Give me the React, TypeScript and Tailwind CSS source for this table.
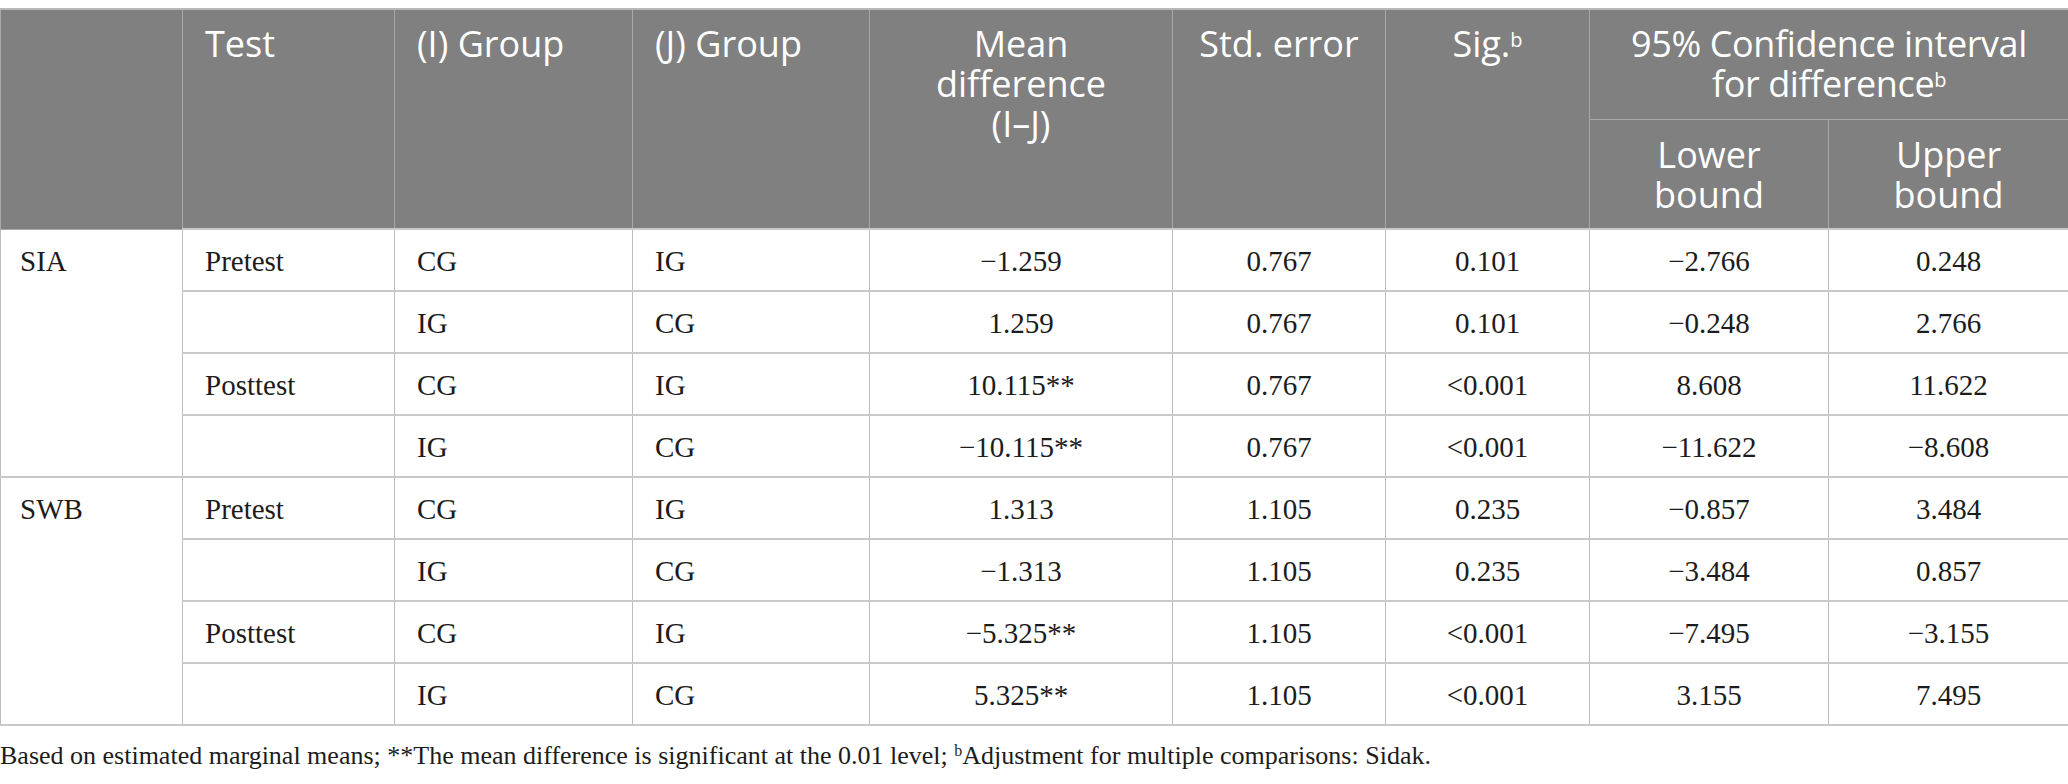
import React from 'react';

type Row = {
  measure?: string;
  span?: number;
  test: string;
  i: string;
  j: string;
  mean: string;
  se: string;
  sig: string;
  lo: string;
  hi: string;
};

const rows: Row[] = [
  { measure: 'SIA', span: 4, test: 'Pretest', i: 'CG', j: 'IG', mean: '−1.259', se: '0.767', sig: '0.101', lo: '−2.766', hi: '0.248' },
  { test: '', i: 'IG', j: 'CG', mean: '1.259', se: '0.767', sig: '0.101', lo: '−0.248', hi: '2.766' },
  { test: 'Posttest', i: 'CG', j: 'IG', mean: '10.115**', se: '0.767', sig: '<0.001', lo: '8.608', hi: '11.622' },
  { test: '', i: 'IG', j: 'CG', mean: '−10.115**', se: '0.767', sig: '<0.001', lo: '−11.622', hi: '−8.608' },
  { measure: 'SWB', span: 4, test: 'Pretest', i: 'CG', j: 'IG', mean: '1.313', se: '1.105', sig: '0.235', lo: '−0.857', hi: '3.484' },
  { test: '', i: 'IG', j: 'CG', mean: '−1.313', se: '1.105', sig: '0.235', lo: '−3.484', hi: '0.857' },
  { test: 'Posttest', i: 'CG', j: 'IG', mean: '−5.325**', se: '1.105', sig: '<0.001', lo: '−7.495', hi: '−3.155' },
  { test: '', i: 'IG', j: 'CG', mean: '5.325**', se: '1.105', sig: '<0.001', lo: '3.155', hi: '7.495' },
];

const th = 'bg-[#808080] border border-[#a9a9a9] text-white font-normal align-top';
const td = 'border-x border-x-[#bcbcbc] border-y-2 border-y-[#c9c9c9] pt-[4px] align-middle';

export default function App() {
  return (
    <div className="w-[2068px] bg-white pt-2 font-['Liberation_Serif',serif] text-[#1c1c1c]">
      <table className="w-[2068px] table-fixed border-collapse border-t-2 border-t-[#b8b8b8]">
        <colgroup>
          <col className="w-[182px]" />
          <col className="w-[212px]" />
          <col className="w-[238px]" />
          <col className="w-[237px]" />
          <col className="w-[303px]" />
          <col className="w-[213px]" />
          <col className="w-[204px]" />
          <col className="w-[239px]" />
          <col className="w-[240px]" />
        </colgroup>
        <thead className="font-['Open_Sans',sans-serif] text-[36px] leading-[40px]">
          <tr className="h-[110px]">
            <th rowSpan={2} className={th} />
            <th rowSpan={2} className={`${th} text-left pl-[22px] pt-[14px]`}>Test</th>
            <th rowSpan={2} className={`${th} text-left pl-[22px] pt-[14px]`}>(I) Group</th>
            <th rowSpan={2} className={`${th} text-left pl-[22px] pt-[14px]`}>(J) Group</th>
            <th rowSpan={2} className={`${th} text-center pt-[14px]`}>
              Mean
              <br />
              difference
              <br />
              (I–J)
            </th>
            <th rowSpan={2} className={`${th} text-center pt-[14px]`}>Std. error</th>
            <th rowSpan={2} className={`${th} text-center pt-[14px]`}>
              Sig.<sup className="text-[20px]">b</sup>
            </th>
            <th colSpan={2} className={`${th} text-center pt-[14px] tracking-[-0.4px]`}>
              95% Confidence interval
              <br />
              for difference<sup className="text-[20px]">b</sup>
            </th>
          </tr>
          <tr className="h-[110px]">
            <th className={`${th} text-center pt-[15px]`}>
              Lower
              <br />
              bound
            </th>
            <th className={`${th} text-center pt-[15px]`}>
              Upper
              <br />
              bound
            </th>
          </tr>
        </thead>
        <tbody className="text-[29px]">
          {rows.map((r, idx) => (
            <tr key={idx} className="h-[62px]">
              {r.measure && (
                <td rowSpan={r.span} className="border border-[#bcbcbc] border-b-2 border-b-[#c9c9c9] align-top pl-[19px] pt-[10px]">
                  {r.measure}
                </td>
              )}
              <td className={`${td} pl-[22px]`}>{r.test}</td>
              <td className={`${td} pl-[22px]`}>{r.i}</td>
              <td className={`${td} pl-[22px]`}>{r.j}</td>
              <td className={`${td} text-center`}>{r.mean}</td>
              <td className={`${td} text-center`}>{r.se}</td>
              <td className={`${td} text-center`}>{r.sig}</td>
              <td className={`${td} text-center`}>{r.lo}</td>
              <td className={`${td} text-center`}>{r.hi}</td>
            </tr>
          ))}
        </tbody>
      </table>
      <p className="mt-[14px] text-[26px] leading-[32px]">
        Based on estimated marginal means; **The mean difference is significant at the 0.01 level;{' '}
        <sup className="text-[16px]">b</sup>Adjustment for multiple comparisons: Sidak.
      </p>
    </div>
  );
}
